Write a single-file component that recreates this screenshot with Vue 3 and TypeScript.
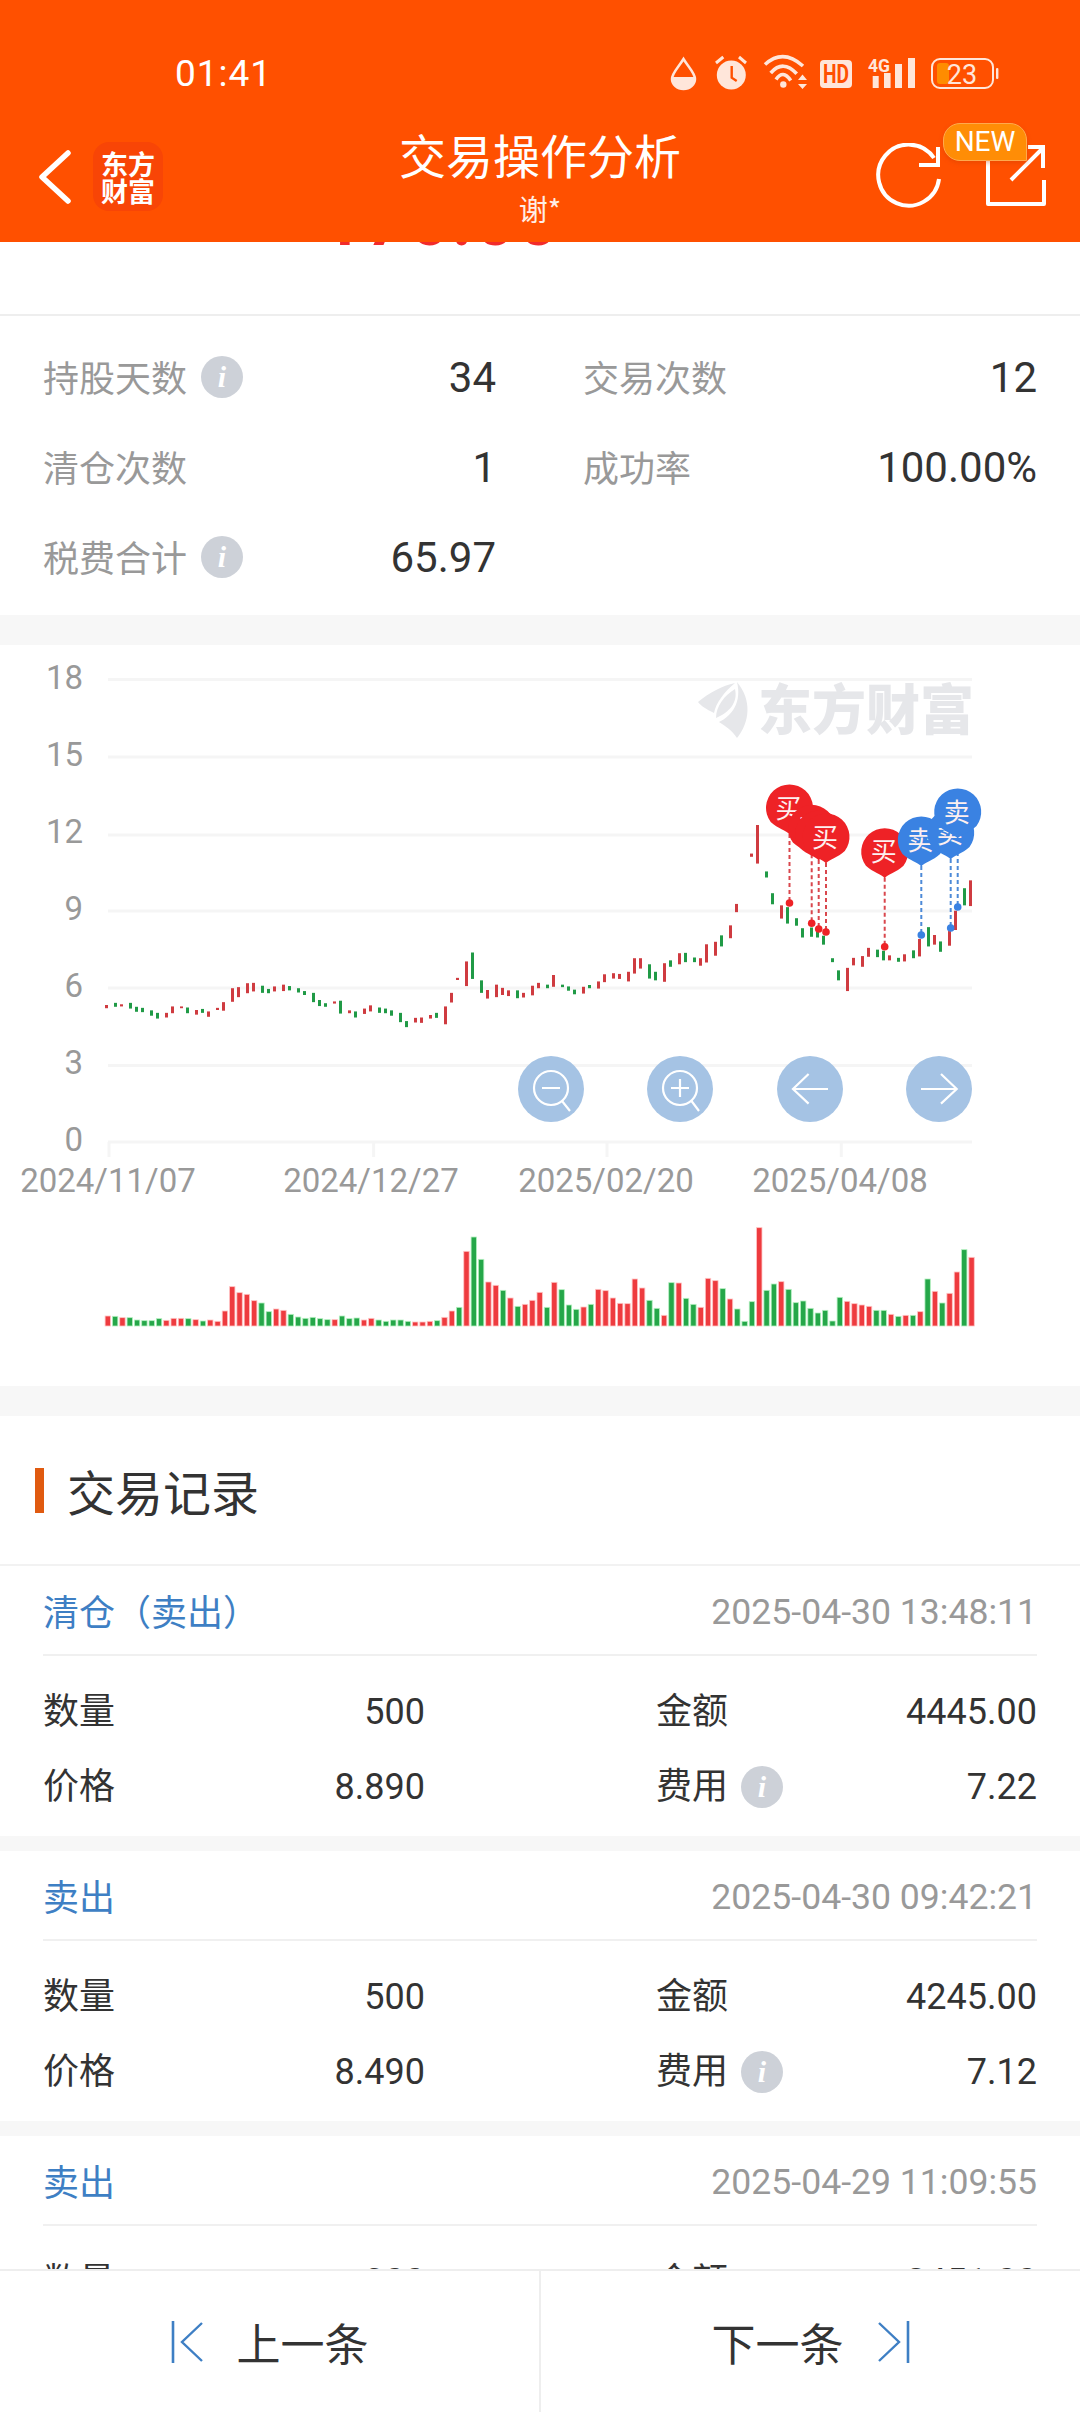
<script setup lang="ts">
type Cd = [number, number, number, 0 | 1]

// candle data: x, top, bottom, colour (0 red, 1 green)
const left: Cd[] = [
  [309,1022,1031,0],[335,1016,1027,1],[352,1020,1026,0],[379,1016,1032,1],[396,1027,1041,1],[413,1030,1042,1],
  [440,1037,1052,1],[457,1044,1060,1],[483,1044,1057,0],[501,1026,1045,0],[527,1026,1031,0],[545,1029,1045,1],
  [570,1036,1049,0],[588,1033,1044,1],[605,1040,1055,0],[632,1030,1036,0],[649,1014,1038,0],[675,975,1013,0],
  [692,972,1000,0],[718,961,989,0],[736,960,984,0],[762,968,988,1],[780,977,989,1],[797,970,984,0],
  [823,965,983,0],[841,969,981,1],[867,975,987,1],[884,983,994,1],[910,988,1014,1],[928,1008,1025,1],
  [945,1017,1027,1],[971,1012,1018,0],[988,1010,1046,1],[1015,1037,1045,0],[1032,1040,1057,1],[1058,1032,1047,0],
  [1075,1023,1040,0],[1102,1029,1044,1],[1119,1032,1045,1],[1136,1037,1052,1],[1163,1044,1070,1],[1180,1067,1084,1],
  [1206,1058,1071,0],[1224,1057,1072,0],[1250,1050,1060,0],[1267,1044,1058,1],[1293,1026,1076,0],[1311,988,1015,0],
  [1328,946,952,0],[1354,900,969,0],[1372,875,949,1],[1398,953,988,1],[1415,980,1004,0],[1441,965,1000,0],
  [1459,974,994,0],[1476,981,997,0],[1502,981,1003,1],[1520,988,1001,0],[1546,968,995,0],[1563,960,975,0],
]
const right: Cd[] = [
  [21,965,975,1],[39,938,971,0],[65,965,972,1],[83,970,982,1],[100,979,992,1],[126,971,990,0],[143,966,975,1],
  [170,956,976,0],[187,936,958,0],[213,933,948,0],[231,935,949,0],[257,929,956,0],[274,891,934,0],[291,891,920,0],
  [318,908,948,1],[335,929,953,1],[361,905,957,0],[379,897,915,1],[405,877,908,0],[422,876,902,1],[449,889,902,1],
  [466,891,912,0],[484,852,903,0],[510,845,884,0],[527,827,858,1],[553,799,835,0],[570,739,762,0],[614,598,607,0],
  [631,518,626,0],[657,648,665,1],[675,709,740,1],[701,743,780,0],[718,748,794,1],[744,779,800,1],[762,807,833,1],
  [788,805,831,1],[805,817,833,1],[823,828,853,1],[849,891,902,1],[866,925,953,1],[893,918,983,0],[910,890,911,0],
  [936,885,915,0],[953,862,887,0],[980,867,888,1],[997,870,897,1],[1014,883,897,0],[1041,890,901,1],[1058,880,900,0],
  [1084,869,891,1],[1102,837,886,0],[1128,804,858,1],[1145,826,853,0],[1163,844,873,1],[1189,815,856,0],[1206,758,812,0],
  [1232,695,743,1],[1250,673,745,0],
]
const candles = [...left, ...right.map(([x, t, b, c]): Cd => [x + 1568, t, b, c])].map(([x, t, b, c]) => ({
  x: Math.round(x / 2.904 - 1.5),
  y: 640 + t / 2.8,
  h: (b - t) / 2.8,
  c,
}))

const volTops = [
  378,379,383,383,390,392,392,386,391,385,385,386,389,393,390,394,363,290,308,313,332,339,365,357,361,373,381,385,382,386,
  389,389,378,386,384,390,385,390,394,390,390,394,396,396,394,392,382,363,352,184,141,208,276,286,301,324,349,343,331,307,
  352,277,299,345,358,351,343,298,302,324,340,341,267,294,331,355,376,278,279,325,343,352,265,272,296,327,357,394,335,113,
  301,282,275,298,338,333,355,369,361,393,322,334,341,345,349,361,361,373,379,376,376,365,267,304,339,310,246,179,202,
]
const volColors = [
  0,1,0,1,1,1,1,1,0,0,0,1,0,1,0,0,0,0,0,0,0,1,1,0,0,1,1,1,1,1,
  1,0,1,1,1,0,0,1,1,1,1,1,0,0,0,1,0,0,1,0,1,1,0,0,1,0,1,0,0,0,
  1,0,1,1,1,0,1,0,0,0,0,0,0,0,1,1,0,1,0,1,1,0,0,0,1,0,1,1,1,0,
  1,1,0,1,1,1,1,1,1,1,1,0,0,0,0,1,1,0,1,0,1,0,1,0,1,0,0,1,0,
]
const bars = volTops.map((t, i) => ({
  x: 107.8 + i * 7.32 - 2.7,
  y: 1190 + t / 3,
  h: (408 - t) / 3,
  c: volColors[i],
}))

const grid = [679.5, 757, 835, 911, 988, 1065.5, 1142]
const yLabels = ['18', '15', '12', '9', '6', '3', '0']
const ticks = [109, 373.6, 607, 841.3]
const xLabels = [
  { x: 108, t: '2024/11/07' },
  { x: 371, t: '2024/12/27' },
  { x: 606, t: '2025/02/20' },
  { x: 840, t: '2025/04/08' },
]
const circles = [551, 680, 810, 939]

const balloonPath = (cx: number, cy: number) => {
  const r = 23.5
  const tip = cy + 26.5
  return `M${cx} ${tip}C${cx - 3} ${tip - 4} ${cx - r * 0.5} ${cy + r * 0.88} ${cx - r * 0.8} ${cy + r * 0.6}` +
    `A${r} ${r} 0 1 1 ${cx + r * 0.8} ${cy + r * 0.6}C${cx + r * 0.5} ${cy + r * 0.88} ${cx + 3} ${tip - 4} ${cx} ${tip}Z`
}
const marks = [
  { x: 789.5, y: 903, blue: false },
  { x: 811.7, y: 923.3, blue: false },
  { x: 818.7, y: 929, blue: false },
  { x: 826, y: 932, blue: false },
  { x: 884.7, y: 946.7, blue: false },
  { x: 921.3, y: 935, blue: true },
  { x: 950.7, y: 928, blue: true },
  { x: 957.7, y: 907, blue: true },
].map((m) => ({ ...m, cy: m.y - 95, d: balloonPath(m.x, m.y - 95), t: m.blue ? '卖' : '买' }))

const stats = [
  { label: '持股天数', info: true, value: '34' },
  { label: '交易次数', info: false, value: '12' },
  { label: '清仓次数', info: false, value: '1' },
  { label: '成功率', info: false, value: '100.00%' },
  { label: '税费合计', info: true, value: '65.97' },
]
const records = [
  { type: '清仓（卖出）', time: '2025-04-30 13:48:11', qty: '500', amount: '4445.00', price: '8.890', fee: '7.22' },
  { type: '卖出', time: '2025-04-30 09:42:21', qty: '500', amount: '4245.00', price: '8.490', fee: '7.12' },
  { type: '卖出', time: '2025-04-29 11:09:55', qty: '300', amount: '2451.00', price: '8.170', fee: '6.45' },
]
</script>

<template>
  <div class="page">
    <header class="head">
      <div class="status">
        <span class="time">01:41</span>
        <svg class="status-icons" width="330" height="40" viewBox="670 52 330 40">
          <path d="M683.5 58C678 67 672 72 672 78A11.5 10 0 0 0 695 78C695 72 689 67 683.5 58Z" fill="none" stroke="#ffe6da" stroke-width="2.5" />
          <path d="M671 76H696A12.5 12 0 0 1 671 76Z" fill="#ffe6da" />
          <circle cx="731.3" cy="74" r="14.5" fill="#ffe6da" />
          <path d="M731.7 65V76.7L736.7 80" fill="none" stroke="#ff5000" stroke-width="2.4" />
          <path d="M716 62L723.3 56M739 56L746 62" stroke="#ffe6da" stroke-width="3" fill="none" />
          <path d="M765 63.5Q783 47 803 65M770.7 72Q783 58 796.7 72.7M776 78.5Q783 68 790.7 79.5" fill="none" stroke="#ffe6da" stroke-width="3.6" />
          <circle cx="783.3" cy="83.5" r="3.2" fill="#ffe6da" />
          <path d="M798 79L802.5 73.5L807 79ZM798 83L807 83L802.5 88Z" fill="#ffe6da" />
          <rect x="820" y="59" width="32" height="28" rx="4" fill="#ffe6da" />
          <text x="836" y="82" class="t-hd" text-anchor="middle" textLength="26" lengthAdjust="spacingAndGlyphs">HD</text>
          <text x="868" y="71" class="t-4g" textLength="22" lengthAdjust="spacingAndGlyphs">4G</text>
          <rect x="872.7" y="75" width="6" height="12" fill="#ffe6da" />
          <rect x="884" y="72" width="6.6" height="15" fill="#ffe6da" />
          <rect x="895" y="63" width="7" height="24" fill="#ffe6da" />
          <rect x="908" y="57" width="7" height="30" fill="#ffe6da" />
          <rect x="932" y="58" width="61" height="29" rx="8" fill="none" stroke="#ffe6da" stroke-width="2" />
          <rect x="937" y="62" width="12" height="21" rx="3" fill="#ff8c00" />
          <text x="962" y="82.5" class="t-bat" text-anchor="middle">23</text>
          <rect x="996" y="67" width="2.4" height="11" rx="1" fill="#ffe6da" />
        </svg>
      </div>
      <nav class="nav">
        <div class="nav-left">
          <svg width="36" height="56" viewBox="0 0 36 56" class="back">
            <path d="M29 4L3 28L29 52" fill="none" stroke="#fff" stroke-width="5.5" stroke-linecap="round" stroke-linejoin="round" />
          </svg>
          <div class="logo"><span>东方</span><span>财富</span></div>
        </div>
        <div class="nav-title">
          <div class="title">交易操作分析</div>
          <div class="sub">谢*</div>
        </div>
        <div class="nav-right">
          <svg width="66" height="66" viewBox="0 0 66 66">
            <path d="M63 36A30.5 30.5 0 1 1 58 15" fill="none" stroke="#fff" stroke-width="4" />
            <path d="M43 22H62V4" fill="none" stroke="#fff" stroke-width="4" />
          </svg>
          <svg width="64" height="66" viewBox="0 0 64 66">
            <path d="M4 10V61H60V37" fill="none" stroke="#fff" stroke-width="4" stroke-linejoin="round" />
            <path d="M27 37L59 5M44 4H59V25" fill="none" stroke="#fff" stroke-width="4" />
          </svg>
          <span class="badge">NEW</span>
        </div>
      </nav>
    </header>

    <main class="main">
      <section class="profit">
        <div class="profit-num">176.00</div>
      </section>

      <section class="stats">
        <div v-for="s in stats" :key="s.label" class="stat">
          <span class="stat-label">{{ s.label }}</span>
          <i v-if="s.info" class="info">i</i>
          <span class="stat-value">{{ s.value }}</span>
        </div>
      </section>

      <section class="chart">
        <svg width="1080" height="741" viewBox="0 645 1080 741">
          <line v-for="g in grid" :key="g" x1="108" x2="972" :y1="g" :y2="g" class="grid" />
          <line v-for="t in ticks" :key="t" :x1="t" :x2="t" y1="1142" y2="1157" class="grid" />
          <text v-for="(l, i) in yLabels" :key="l" x="83" :y="688.5 + i * 77" class="axis" text-anchor="end">{{ l }}</text>
          <text v-for="l in xLabels" :key="l.t" :x="l.x" y="1192" class="axis" text-anchor="middle">{{ l.t }}</text>

          <g class="mark-logo">
            <path d="M698 702C710 692 722 686 735 683C724 692 716 703 714 713C706 709 701 706 698 702Z" />
            <path d="M737 682C752 700 750 722 737 738C732 730 725 726 719 722C732 716 742 702 737 682Z" />
            <path d="M735 689C738 702 730 712 716 718C716 706 724 696 735 689Z" />
          </g>
          <text x="758" y="730" class="mark-text">东方财富</text>

          <rect v-for="(c, i) in candles" :key="i" :x="c.x" :y="c.y" width="3" :height="c.h" :class="c.c ? 'green' : 'red'" />

          <rect v-for="(b, i) in bars" :key="'v' + i" :x="b.x" :y="b.y" width="5.4" :height="b.h" :class="b.c ? 'vgreen' : 'vred'" />

          <g v-for="(m, i) in marks" :key="'m' + i">
            <line :x1="m.x" :x2="m.x" :y1="m.cy + 26" :y2="m.y" :class="m.blue ? 'dash-b' : 'dash-r'" />
            <circle :cx="m.x" :cy="m.y" r="3.8" :class="m.blue ? 'fill-b' : 'fill-r'" />
          </g>
          <g v-for="(m, i) in marks" :key="'b' + i">
            <path :d="m.d" :class="m.blue ? 'fill-b' : 'fill-r'" />
            <text :x="m.x - 1" :y="m.cy + 9.5" class="pin" text-anchor="middle">{{ m.t }}</text>
          </g>

          <g v-for="c in circles" :key="c">
            <circle :cx="c" cy="1089" r="33" class="btn" />
          </g>
          <g class="ico">
            <circle cx="551" cy="1088" r="17" />
            <path d="M562 1101L570 1111M542 1088H560" />
            <circle cx="680" cy="1088" r="17" />
            <path d="M691.5 1101L699 1111M671 1088H689M680 1079V1097" />
            <path d="M793 1089H828M808.6 1074L793 1089L808.6 1103.6" />
            <path d="M921 1089H956.7M941 1074L956.7 1089L941 1103.6" />
          </g>
        </svg>
      </section>

      <section class="records">
        <div class="rec-title"><i class="rec-bar"></i><h2>交易记录</h2></div>
        <article v-for="r in records" :key="r.time" class="rec">
          <div class="rec-head">
            <span class="rec-type">{{ r.type }}</span>
            <span class="rec-time">{{ r.time }}</span>
          </div>
          <div class="rec-grid">
            <div class="rec-cell"><span>数量</span><b>{{ r.qty }}</b></div>
            <div class="rec-cell"><span>金额</span><b>{{ r.amount }}</b></div>
            <div class="rec-cell"><span>价格</span><b>{{ r.price }}</b></div>
            <div class="rec-cell"><span>费用</span><i class="info fee-info">i</i><b>{{ r.fee }}</b></div>
          </div>
        </article>
      </section>
    </main>

    <footer class="foot">
      <button class="foot-btn">
        <svg width="32" height="44" viewBox="0 0 32 44">
          <path d="M2 1V43" stroke="#3e7fc4" stroke-width="2.6" fill="none" />
          <path d="M31 3L11 22L31 41" stroke="#3e7fc4" stroke-width="2.4" fill="none" />
        </svg>
        <span>上一条</span>
      </button>
      <button class="foot-btn">
        <span>下一条</span>
        <svg width="32" height="44" viewBox="0 0 32 44">
          <path d="M1 3L21 22L1 41" stroke="#3e7fc4" stroke-width="2.4" fill="none" />
          <path d="M30 1V43" stroke="#3e7fc4" stroke-width="2.6" fill="none" />
        </svg>
      </button>
    </footer>
  </div>
</template>

<style scoped>
.page {
  width: 1080px;
  height: 2412px;
  display: flex;
  flex-direction: column;
  overflow: hidden;
  background: #f7f7f7;
  font-family: Roboto, "Noto Sans CJK SC", sans-serif;
  color: #333;
}
.head {
  flex: none;
  height: 242px;
  background: #ff5000;
  color: #fff;
  position: relative;
  z-index: 2;
}
.status {
  height: 118px;
  box-sizing: border-box;
  padding: 28px 80px 0 175px;
  display: flex;
  align-items: center;
  justify-content: space-between;
}
.time { font-size: 37px; letter-spacing: 1px; }
.status-icons { display: block; }
.t-hd { font: 700 25px Roboto, sans-serif; fill: #ff5000; }
.t-4g { font: 700 18px Roboto, sans-serif; fill: #ffe6da; }
.t-bat { font: 400 27px Roboto, sans-serif; fill: #ffe6da; }
.nav {
  height: 124px;
  display: grid;
  grid-template-columns: 1fr auto 1fr;
  align-items: start;
}
.nav-left {
  display: flex;
  align-items: center;
  margin: 24px 0 0 39px;
  gap: 18px;
}
.logo {
  width: 70px;
  height: 69px;
  border-radius: 16px;
  background: #f84506;
  display: flex;
  flex-direction: column;
  align-items: center;
  justify-content: center;
  font: 700 27px/27px "Noto Sans CJK SC", sans-serif;
}
.logo span { display: block; }
.nav-title { text-align: center; padding-top: 12px; }
.title { font: 400 47px/48px "Noto Sans CJK SC", sans-serif; }
.sub { font: 400 29px/30px "Noto Sans CJK SC", sans-serif; margin-top: 15px; color: #ffeee6; }
.nav-right {
  position: relative;
  display: flex;
  justify-content: flex-end;
  gap: 42px;
  margin: 25px 32px 0 auto;
}
.badge {
  position: absolute;
  top: -20px;
  right: 21px;
  width: 84px;
  height: 38px;
  box-sizing: border-box;
  border: 1px solid #ffa94d;
  border-radius: 17px 17px 0 17px;
  background: #ff8d06;
  box-shadow: 0 2px 4px rgba(200, 60, 0, 0.35);
  font: 400 28px/36px Roboto, sans-serif;
  text-align: center;
  color: #fff;
}
.main {
  flex: 1;
  min-height: 0;
  overflow: hidden;
}
.profit {
  height: 72px;
  overflow: hidden;
  background: #fff;
  border-bottom: 2px solid #eeeeee;
}
.profit-num {
  margin-top: -54px;
  padding-left: 323px;
  font: 700 68px/68px Roboto, sans-serif;
  letter-spacing: 4px;
  color: #f22b2b;
}
.stats {
  height: 299px;
  box-sizing: border-box;
  padding: 16px 43px 0;
  background: #fff;
  display: grid;
  grid-template-columns: 453px 454px;
  grid-auto-rows: 90px;
  column-gap: 87px;
  margin-bottom: 30px;
}
.stat {
  display: flex;
  align-items: center;
  font-size: 36px;
}
.stat-label { color: #999; margin-bottom: 3px; }
.stat-value { margin-left: auto; font-size: 42px; color: #333; }
.info {
  flex: none;
  width: 42px;
  height: 42px;
  border-radius: 50%;
  margin-left: 14px;
  background: #cdd1d8;
  color: #fff;
  font: italic 700 30px/42px "Liberation Serif", serif;
  text-align: center;
}
.chart {
  height: 741px;
  background: #fff;
  margin-bottom: 30px;
}
.chart svg { display: block; }
.grid { stroke: #f5f5f5; stroke-width: 3; }
.axis { font: 400 33px Roboto, sans-serif; fill: #999; }
.mark-logo path { fill: #e6e7ea; }
.mark-text { font: 900 54px "Noto Sans CJK SC", sans-serif; fill: #e6e7ea; }
.red { fill: #cf3b40; }
.green { fill: #209a46; }
.vred { fill: #ee3b3f; stroke: #ffc4c4; stroke-width: 0.8; }
.vgreen { fill: #25a749; stroke: #b4f0c0; stroke-width: 0.8; }
.dash-r { stroke: #d9474d; stroke-width: 2; stroke-dasharray: 4 3; }
.dash-b { stroke: #4d8ad8; stroke-width: 2; stroke-dasharray: 4 3; }
.fill-r { fill: #ee2226; }
.fill-b { fill: #3a82e2; }
.pin { font: 400 26px "Noto Sans CJK SC", sans-serif; fill: #fdf0f0; }
.btn { fill: #a5c3e4; }
.ico circle, .ico path { fill: none; stroke: #fff; stroke-width: 2.2; }
.records { background: #f7f7f7; }
.rec-title {
  height: 150px;
  box-sizing: border-box;
  display: flex;
  align-items: center;
  gap: 23px;
  padding-left: 35px;
  background: #fff;
  border-bottom: 2px solid #f2f2f2;
}
.rec-bar { width: 9px; height: 45px; background: #e05a10; }
.rec-title h2 { margin: 0; font: 400 48px "Noto Sans CJK SC", sans-serif; color: #333; }
.rec {
  height: 270px;
  box-sizing: border-box;
  padding: 0 43px;
  background: #fff;
  margin-bottom: 15px;
}
.rec-head {
  height: 90px;
  box-sizing: border-box;
  border-bottom: 2px solid #f0f0f0;
  display: flex;
  align-items: center;
  justify-content: space-between;
  font-size: 36px;
}
.rec-type { color: #3e7fc4; }
.rec-time { font-size: 35.6px; color: #999; margin-top: 4px; }
.rec-grid {
  padding-top: 18px;
  display: grid;
  grid-template-columns: 382px 381px;
  justify-content: space-between;
  grid-auto-rows: 75px;
}
.rec-cell {
  display: flex;
  align-items: center;
  font-size: 36px;
}
.rec-cell > span { margin-bottom: 8px; }
.rec-cell b { margin-left: auto; font-weight: 400; font-size: 36px; }
.fee-info { margin-left: 13px; }
.foot {
  flex: none;
  height: 143px;
  box-sizing: border-box;
  border-top: 2px solid #eeeeee;
  background: #fff;
  display: flex;
}
.foot-btn {
  flex: 1;
  display: flex;
  align-items: center;
  justify-content: center;
  gap: 34px;
  border: 0;
  padding: 0;
  background: #fff;
  color: #333;
  font: 400 44px "Noto Sans CJK SC", sans-serif;
}
.foot-btn + .foot-btn { border-left: 2px solid #eeeeee; }
</style>
